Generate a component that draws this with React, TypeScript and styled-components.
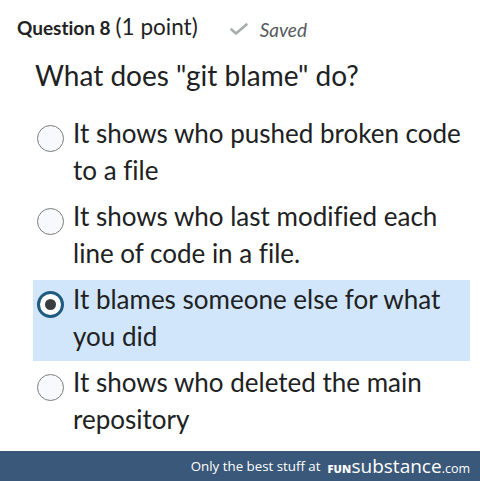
import React from 'react';
import styled, { createGlobalStyle } from 'styled-components';

const GlobalStyle = createGlobalStyle`
  html, body {
    margin: 0;
    padding: 0;
    background: #ffffff;
  }
  body {
    font-family: Lato, "Noto Sans", sans-serif;
    color: #202122;
    font-variant-ligatures: none;
  }
`;

const Page = styled.div`
  width: 480px;
  height: 481px;
  display: flex;
  flex-direction: column;
  overflow: hidden;
`;

const Content = styled.div`
  flex: 1;
  display: flex;
  flex-direction: column;
`;

const Header = styled.div`
  display: flex;
  align-items: baseline;
  padding: 13px 0 0 17px;
  height: 31px;
`;

const QuestionNumber = styled.span`
  font-weight: 700;
  font-size: 19px;
  color: #222;
`;

const Points = styled.span`
  font-size: 22.5px;
  margin-left: 5px;
  color: #222;
`;

const SavedStatus = styled.span`
  display: inline-flex;
  align-items: center;
  margin-left: 32px;
  font-style: italic;
  font-size: 19px;
  color: #565a5c;
`;

const Check = styled.svg`
  width: 18px;
  height: 12px;
  margin-right: 12px;
  align-self: center;
`;

const Prompt = styled.div`
  font-size: 28px;
  padding: 14px 0 0 35px;
  height: 50px;
  color: #202122;
`;

const Options = styled.div`
  display: flex;
  flex-direction: column;
  gap: 2px;
  margin-top: 6px;
`;

const Option = styled.label<{ $selected?: boolean }>`
  display: flex;
  align-items: flex-start;
  margin: 0 10px 0 33px;
  padding: 1px 0 6px 4px;
  background: ${(p) => (p.$selected ? '#d1e6fa' : 'transparent')};
`;

const Radio = styled.span<{ $checked?: boolean }>`
  flex: none;
  box-sizing: border-box;
  width: 27px;
  height: 27px;
  margin-top: 10px;
  margin-right: 9px;
  border-radius: 50%;
  border: ${(p) => (p.$checked ? '3px solid #1f5a80' : '1px solid #7c7c7c')};
  background: ${(p) => (p.$checked ? '#ffffff' : '#f7f9fc')};
  display: flex;
  align-items: center;
  justify-content: center;
`;

const Dot = styled.span`
  width: 11px;
  height: 11px;
  border-radius: 50%;
  background: #3a3d40;
`;

const OptionText = styled.span`
  font-size: 26px;
  line-height: 37px;
  color: #202122;
`;

const Footer = styled.div`
  height: 30px;
  background: #3a5879;
  color: #ffffff;
  display: flex;
  align-items: center;
  justify-content: flex-end;
  padding-right: 10px;
  font-family: "Open Sans", "DejaVu Sans", sans-serif;
  font-size: 13.3px;
`;

const Brand = styled.span`
  margin-left: 7px;
  display: inline-flex;
  align-items: baseline;
`;

const BrandFun = styled.b`
  font-weight: 800;
  font-size: 11px;
  letter-spacing: 0.2px;
`;

const BrandName = styled.span`
  font-size: 19px;
`;

const BrandTld = styled.span`
  font-size: 12.5px;
`;

const answers = [
  { text: 'It shows who pushed broken code to a file', selected: false },
  { text: 'It shows who last modified each line of code in a file.', selected: false },
  { text: 'It blames someone else for what you did', selected: true },
  { text: 'It shows who deleted the main repository', selected: false },
];

export default function App() {
  return (
    <Page>
      <GlobalStyle />
      <Content>
        <Header>
          <QuestionNumber>Question 8</QuestionNumber>
          <Points>(1 point)</Points>
          <SavedStatus>
            <Check viewBox="0 0 18 12">
              <path d="M1.5 6.5 L6 10.5 L16.5 1.5" fill="none" stroke="#a9adb1" strokeWidth="2.6" strokeLinecap="round" strokeLinejoin="round" />
            </Check>
            Saved
          </SavedStatus>
        </Header>
        <Prompt>What does "git blame" do?</Prompt>
        <Options>
          {answers.map((a) => (
            <Option key={a.text} $selected={a.selected}>
              <Radio $checked={a.selected}>{a.selected && <Dot />}</Radio>
              <OptionText>{a.text}</OptionText>
            </Option>
          ))}
        </Options>
      </Content>
      <Footer>
        Only the best stuff at
        <Brand>
          <BrandFun>FUN</BrandFun>
          <BrandName>substance</BrandName>
          <BrandTld>.com</BrandTld>
        </Brand>
      </Footer>
    </Page>
  );
}
